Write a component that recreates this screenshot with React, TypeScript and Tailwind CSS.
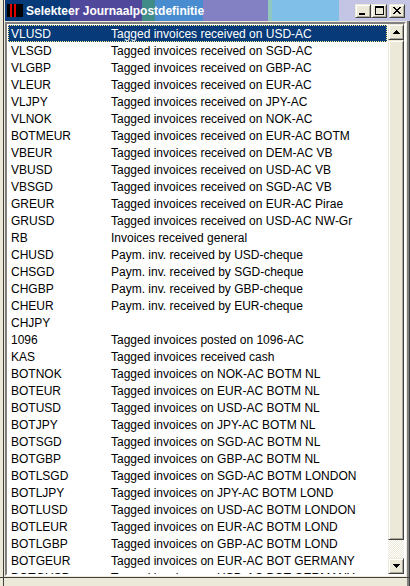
import * as React from "react"

const rows: [string, string][] = [
  ["VLUSD", "Tagged invoices received on USD-AC"],
  ["VLSGD", "Tagged invoices received on SGD-AC"],
  ["VLGBP", "Tagged invoices received on GBP-AC"],
  ["VLEUR", "Tagged invoices received on EUR-AC"],
  ["VLJPY", "Tagged invoices received on JPY-AC"],
  ["VLNOK", "Tagged invoices received on NOK-AC"],
  ["BOTMEUR", "Tagged invoices received on EUR-AC BOTM"],
  ["VBEUR", "Tagged invoices received on DEM-AC VB"],
  ["VBUSD", "Tagged invoices received on USD-AC VB"],
  ["VBSGD", "Tagged invoices received on SGD-AC VB"],
  ["GREUR", "Tagged invoices received on EUR-AC Pirae"],
  ["GRUSD", "Tagged invoices received on USD-AC NW-Gr"],
  ["RB", "Invoices received general"],
  ["CHUSD", "Paym. inv. received by USD-cheque"],
  ["CHSGD", "Paym. inv. received by SGD-cheque"],
  ["CHGBP", "Paym. inv. received by GBP-cheque"],
  ["CHEUR", "Paym. inv. received by EUR-cheque"],
  ["CHJPY", ""],
  ["1096", "Tagged invoices posted on 1096-AC"],
  ["KAS", "Tagged invoices received cash"],
  ["BOTNOK", "Tagged invoices on NOK-AC BOTM NL"],
  ["BOTEUR", "Tagged invoices on EUR-AC BOTM NL"],
  ["BOTUSD", "Tagged invoices on USD-AC BOTM NL"],
  ["BOTJPY", "Tagged invoices on JPY-AC BOTM NL"],
  ["BOTSGD", "Tagged invoices on SGD-AC BOTM NL"],
  ["BOTGBP", "Tagged invoices on GBP-AC BOTM NL"],
  ["BOTLSGD", "Tagged invoices on SGD-AC BOTM LONDON"],
  ["BOTLJPY", "Tagged invoices on JPY-AC BOTM LOND"],
  ["BOTLUSD", "Tagged invoices on USD-AC BOTM LONDON"],
  ["BOTLEUR", "Tagged invoices on EUR-AC BOTM LOND"],
  ["BOTLGBP", "Tagged invoices on GBP-AC BOTM LOND"],
  ["BOTGEUR", "Tagged invoices on EUR-AC BOT GERMANY"],
  ["BOTGUSD", "Tagged invoices on USD-AC BOT GERMANY"],
]

// raised 3d look used by caption buttons and scrollbar parts
const raised =
  "border border-t-[#ece9d8] border-l-[#ece9d8] border-b-[#404040] border-r-[#404040] shadow-[inset_1px_1px_0_#ffffff,inset_-1px_-1px_0_#aca899] bg-[#ece9d8]"

const CaptionButton: React.FC<{ children: React.ReactNode; className?: string }> = ({ children, className }) => (
  <div className={`flex h-[14px] w-[16px] items-center justify-center ${raised} ${className ?? ""}`}>{children}</div>
)

export default function App() {
  const [selected, setSelected] = React.useState(0)

  return (
    <div className="flex h-[586px] w-[410px] flex-col overflow-hidden bg-[#ece9d8] font-['Liberation_Sans',Arial,sans-serif] shadow-[inset_3px_0_0_#ece9d8,inset_4px_0_0_#404040,inset_-1px_0_0_#404040,inset_-3px_0_0_#808080]">
      {/* title bar */}
      <div className="ml-[5px] flex h-[21px] shrink-0 items-center bg-[linear-gradient(to_right,#063a78_0_65px,#50489a_65px_137px,#408c88_137px_150px,#4a8cd0_150px_198px,#8480c4_198px_263px,#90c8c0_263px_267px,#80c0e8_267px_334px,#c4c4e4_334px)]">
        <div className="ml-[2px] flex h-[13px] w-[16px] gap-[2px] bg-black pl-[3px]">
          <span className="h-full w-[2px] bg-[#e00000]" />
          <span className="h-full w-[2px] bg-[#e00000]" />
        </div>
        <span className="ml-[3px] text-[12px] font-bold leading-none text-white">Selekteer Journaalpostdefinitie</span>
        <div className="mr-[5px] ml-auto flex items-center">
          <CaptionButton>
            <span className="mt-[6px] mr-[3px] h-[2px] w-[6px] bg-black" />
          </CaptionButton>
          <CaptionButton>
            <span className="h-[9px] w-[9px] border border-t-2 border-black" />
          </CaptionButton>
          <CaptionButton className="ml-[2px]">
            <svg width="8" height="7" viewBox="0 0 8 7" shapeRendering="crispEdges">
              <path d="M0 0h2v1h-2zM6 0h2v1h-2zM1 1h2v1h-2zM5 1h2v1h-2zM2 2h4v1h-4zM3 3h2v1h-2zM2 4h4v1h-4zM1 5h2v1h-2zM5 5h2v1h-2zM0 6h2v1h-2zM6 6h2v1h-2z" fill="#000" />
            </svg>
          </CaptionButton>
        </div>
      </div>

      {/* list box */}
      <div className="mt-px ml-[5px] flex h-[554px] w-[401px] shrink-0 border-2 border-t-[#808080] border-l-[#808080] border-b-white border-r-white shadow-[inset_1px_1px_0_#404040]">
        <div className="flex-1 overflow-hidden bg-white px-px pt-px text-[12px] text-black">
          {rows.map(([code, desc], i) => (
            <div
              key={code}
              onClick={() => setSelected(i)}
              className={`grid h-[17px] grid-cols-[102px_1fr] items-center border border-dotted leading-none whitespace-nowrap ${
                i === selected ? "border-[#f4ea8c] bg-[#063a78] text-white" : "border-transparent"
              }`}
            >
              <span className="pl-[2px]">{code}</span>
              <span>{desc}</span>
            </div>
          ))}
        </div>

        {/* scrollbar */}
        <div className="flex w-[16px] flex-col">
          <div className={`flex h-[16px] items-center justify-center ${raised}`}>
            <svg width="7" height="4" viewBox="0 0 7 4" shapeRendering="crispEdges">
              <path d="M3 0h1v1h1v1h1v1h1v1h-7v-1h1v-1h1v-1h1z" fill="#000" />
            </svg>
          </div>
          <div className={`h-[500px] ${raised}`} />
          <div className="flex-1 bg-[repeating-conic-gradient(#ece9d8_0_25%,#ffffff_0_50%)] bg-[length:2px_2px]" />
          <div className={`flex h-[16px] items-center justify-center ${raised}`}>
            <svg width="7" height="4" viewBox="0 0 7 4" shapeRendering="crispEdges">
              <path d="M0 0h7v1h-1v1h-1v1h-1v1h-1v-1h-1v-1h-1v-1h-1z" fill="#000" />
            </svg>
          </div>
        </div>
      </div>

      {/* bottom frame */}
      <div className="mt-px h-px w-full bg-[#404040]" />
      <div className="flex-1" />
    </div>
  )
}
